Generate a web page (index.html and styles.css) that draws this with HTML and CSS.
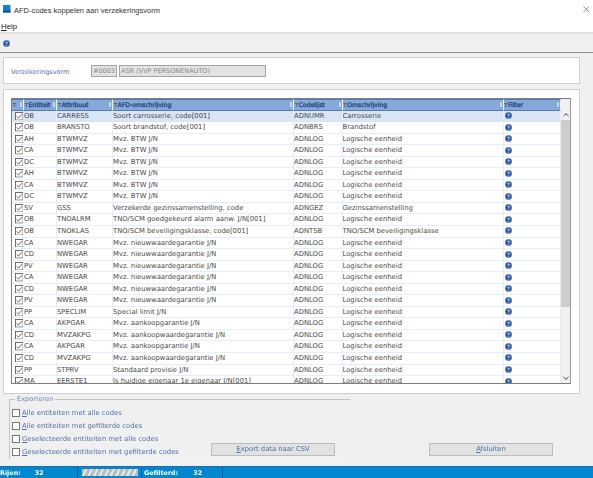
FILE: index.html
```html
<!DOCTYPE html>
<html lang="nl">
<head>
<meta charset="utf-8">
<title>AFD-codes koppelen aan verzekeringsvorm</title>
<link rel="stylesheet" href="styles.css">
</head>
<body>
<svg class="defs" width="0" height="0">
<symbol id="info" viewBox="0 0 8 8"><circle cx="4" cy="4" r="3.8" fill="#2c56a8" stroke="#8d9ab5" stroke-width=".5"/><path d="M2.9 3.1C3 2.2 5.1 2.1 5.1 3.2 5.1 4 4.1 4 4.1 4.9" fill="none" stroke="#fff" stroke-width=".9"/><circle cx="4.1" cy="6" r=".5" fill="#fff"/></symbol>
<symbol id="chk" viewBox="0 0 10 10"><rect x=".5" y=".5" width="9" height="9" fill="#fff" stroke="#555"/><path d="M2.2 5.2 4.1 7.2 7.9 2.7" fill="none" stroke="#333" stroke-width=".9"/></symbol>
</svg>
<div class="window">
<header class="titlebar">
<svg class="appicon" viewBox="0 0 8 8"><rect width="8" height="8" fill="#1a7fc4"/><rect y="6" width="8" height="2" fill="#0f4f86"/></svg>
<span class="title">AFD-codes koppelen aan verzekeringsvorm</span>
<svg class="close" viewBox="0 0 7 7"><path d="M.5.5 6.5 6.5M6.5.5.5 6.5" stroke="#555" stroke-width=".7"/></svg>
</header>
<nav class="menubar"><span><u>H</u>elp</span></nav>
<div class="toolbar"><svg class="tool-info"><use href="#info"/></svg></div>
<main class="content">
<section class="panel top-panel">
<label class="vv-label">Verzekeringsvorm</label>
<span class="field code">#0003</span>
<span class="field name">ASR (VVP PERSONENAUTO)</span>
</section>
<section class="panel grid-panel">
<div class="table-wrap">
<div class="table">
<div class="row head">
<div class="hc"><b><i>T</i></b><em></em></div>
<div class="hc"><b><i>T</i>Entiteit</b><em></em></div>
<div class="hc"><b><i>T</i>Attribuut</b><em></em></div>
<div class="hc"><b><i>T</i>AFD-omschrijving</b><em></em></div>
<div class="hc"><b><i>T</i>Codelijst</b><em></em></div>
<div class="hc"><b><i>T</i>Omschrijving</b><em></em></div>
<div class="hc"><b><i>T</i>Filter</b><em></em></div>
</div>
<div class="row sel"><div class="c ck"><svg><use href="#chk"/></svg></div><div class="c">OB</div><div class="c">CARRESS</div><div class="c">Soort carrosserie, code[001]</div><div class="c">ADNUMR</div><div class="c">Carrosserie</div><div class="c"><svg class="fi"><use href="#info"/></svg></div></div>
<div class="row"><div class="c ck"><svg><use href="#chk"/></svg></div><div class="c">OB</div><div class="c">BRANSTO</div><div class="c">Soort brandstof, code[001]</div><div class="c">ADNBRS</div><div class="c">Brandstof</div><div class="c"><svg class="fi"><use href="#info"/></svg></div></div>
<div class="row"><div class="c ck"><svg><use href="#chk"/></svg></div><div class="c">AH</div><div class="c">BTWMVZ</div><div class="c">Mvz. BTW J/N</div><div class="c">ADNLOG</div><div class="c">Logische eenheid</div><div class="c"><svg class="fi"><use href="#info"/></svg></div></div>
<div class="row"><div class="c ck"><svg><use href="#chk"/></svg></div><div class="c">CA</div><div class="c">BTWMVZ</div><div class="c">Mvz. BTW J/N</div><div class="c">ADNLOG</div><div class="c">Logische eenheid</div><div class="c"><svg class="fi"><use href="#info"/></svg></div></div>
<div class="row"><div class="c ck"><svg><use href="#chk"/></svg></div><div class="c">DC</div><div class="c">BTWMVZ</div><div class="c">Mvz. BTW J/N</div><div class="c">ADNLOG</div><div class="c">Logische eenheid</div><div class="c"><svg class="fi"><use href="#info"/></svg></div></div>
<div class="row"><div class="c ck"><svg><use href="#chk"/></svg></div><div class="c">AH</div><div class="c">BTWMVZ</div><div class="c">Mvz. BTW J/N</div><div class="c">ADNLOG</div><div class="c">Logische eenheid</div><div class="c"><svg class="fi"><use href="#info"/></svg></div></div>
<div class="row"><div class="c ck"><svg><use href="#chk"/></svg></div><div class="c">CA</div><div class="c">BTWMVZ</div><div class="c">Mvz. BTW J/N</div><div class="c">ADNLOG</div><div class="c">Logische eenheid</div><div class="c"><svg class="fi"><use href="#info"/></svg></div></div>
<div class="row"><div class="c ck"><svg><use href="#chk"/></svg></div><div class="c">DC</div><div class="c">BTWMVZ</div><div class="c">Mvz. BTW J/N</div><div class="c">ADNLOG</div><div class="c">Logische eenheid</div><div class="c"><svg class="fi"><use href="#info"/></svg></div></div>
<div class="row"><div class="c ck"><svg><use href="#chk"/></svg></div><div class="c">SV</div><div class="c">GSS</div><div class="c">Verzekerde gezinssamenstelling, code</div><div class="c">ADNGEZ</div><div class="c">Gezinssamenstelling</div><div class="c"><svg class="fi"><use href="#info"/></svg></div></div>
<div class="row"><div class="c ck"><svg><use href="#chk"/></svg></div><div class="c">OB</div><div class="c">TNOALRM</div><div class="c">TNO/SCM goedgekeurd alarm aanw. J/N[001]</div><div class="c">ADNLOG</div><div class="c">Logische eenheid</div><div class="c"><svg class="fi"><use href="#info"/></svg></div></div>
<div class="row"><div class="c ck"><svg><use href="#chk"/></svg></div><div class="c">OB</div><div class="c">TNOKLAS</div><div class="c">TNO/SCM beveiligingsklasse, code[001]</div><div class="c">ADNTSB</div><div class="c">TNO/SCM beveiligingsklasse</div><div class="c"><svg class="fi"><use href="#info"/></svg></div></div>
<div class="row"><div class="c ck"><svg><use href="#chk"/></svg></div><div class="c">CA</div><div class="c">NWEGAR</div><div class="c">Mvz. nieuwwaardegarantie J/N</div><div class="c">ADNLOG</div><div class="c">Logische eenheid</div><div class="c"><svg class="fi"><use href="#info"/></svg></div></div>
<div class="row"><div class="c ck"><svg><use href="#chk"/></svg></div><div class="c">CD</div><div class="c">NWEGAR</div><div class="c">Mvz. nieuwwaardegarantie J/N</div><div class="c">ADNLOG</div><div class="c">Logische eenheid</div><div class="c"><svg class="fi"><use href="#info"/></svg></div></div>
<div class="row"><div class="c ck"><svg><use href="#chk"/></svg></div><div class="c">PV</div><div class="c">NWEGAR</div><div class="c">Mvz. nieuwwaardegarantie J/N</div><div class="c">ADNLOG</div><div class="c">Logische eenheid</div><div class="c"><svg class="fi"><use href="#info"/></svg></div></div>
<div class="row"><div class="c ck"><svg><use href="#chk"/></svg></div><div class="c">CA</div><div class="c">NWEGAR</div><div class="c">Mvz. nieuwwaardegarantie J/N</div><div class="c">ADNLOG</div><div class="c">Logische eenheid</div><div class="c"><svg class="fi"><use href="#info"/></svg></div></div>
<div class="row"><div class="c ck"><svg><use href="#chk"/></svg></div><div class="c">CD</div><div class="c">NWEGAR</div><div class="c">Mvz. nieuwwaardegarantie J/N</div><div class="c">ADNLOG</div><div class="c">Logische eenheid</div><div class="c"><svg class="fi"><use href="#info"/></svg></div></div>
<div class="row"><div class="c ck"><svg><use href="#chk"/></svg></div><div class="c">PV</div><div class="c">NWEGAR</div><div class="c">Mvz. nieuwwaardegarantie J/N</div><div class="c">ADNLOG</div><div class="c">Logische eenheid</div><div class="c"><svg class="fi"><use href="#info"/></svg></div></div>
<div class="row"><div class="c ck"><svg><use href="#chk"/></svg></div><div class="c">PP</div><div class="c">SPECLIM</div><div class="c">Special limit J/N</div><div class="c">ADNLOG</div><div class="c">Logische eenheid</div><div class="c"><svg class="fi"><use href="#info"/></svg></div></div>
<div class="row"><div class="c ck"><svg><use href="#chk"/></svg></div><div class="c">CA</div><div class="c">AKPGAR</div><div class="c">Mvz. aankoopgarantie J/N</div><div class="c">ADNLOG</div><div class="c">Logische eenheid</div><div class="c"><svg class="fi"><use href="#info"/></svg></div></div>
<div class="row"><div class="c ck"><svg><use href="#chk"/></svg></div><div class="c">CD</div><div class="c">MVZAKPG</div><div class="c">Mvz. aankoopwaardegarantie J/N</div><div class="c">ADNLOG</div><div class="c">Logische eenheid</div><div class="c"><svg class="fi"><use href="#info"/></svg></div></div>
<div class="row"><div class="c ck"><svg><use href="#chk"/></svg></div><div class="c">CA</div><div class="c">AKPGAR</div><div class="c">Mvz. aankoopgarantie J/N</div><div class="c">ADNLOG</div><div class="c">Logische eenheid</div><div class="c"><svg class="fi"><use href="#info"/></svg></div></div>
<div class="row"><div class="c ck"><svg><use href="#chk"/></svg></div><div class="c">CD</div><div class="c">MVZAKPG</div><div class="c">Mvz. aankoopwaardegarantie J/N</div><div class="c">ADNLOG</div><div class="c">Logische eenheid</div><div class="c"><svg class="fi"><use href="#info"/></svg></div></div>
<div class="row"><div class="c ck"><svg><use href="#chk"/></svg></div><div class="c">PP</div><div class="c">STPRV</div><div class="c">Standaard provisie J/N</div><div class="c">ADNLOG</div><div class="c">Logische eenheid</div><div class="c"><svg class="fi"><use href="#info"/></svg></div></div>
<div class="row"><div class="c ck"><svg><use href="#chk"/></svg></div><div class="c">MA</div><div class="c">EERSTE1</div><div class="c">Is huidige eigenaar 1e eigenaar J/N[001]</div><div class="c">ADNLOG</div><div class="c">Logische eenheid</div><div class="c"><svg class="fi"><use href="#info"/></svg></div></div>
</div>
<div class="scrollbar">
<svg class="arrow" viewBox="0 0 10 10"><path d="M2.5 6 5 3.6 7.5 6" fill="none" stroke="#444" stroke-width="1"/></svg>
<div class="thumb"></div>
<div class="track"></div>
<svg class="arrow" viewBox="0 0 10 10"><path d="M2.5 4 5 6.4 7.5 4" fill="none" stroke="#444" stroke-width="1"/></svg>
</div>
</div>
</section>
<section class="bottom">
<fieldset class="export">
<legend>Exporteren</legend>
<div class="export-body">
<div class="options">
<label class="opt"><span class="box"></span><span><u>A</u>lle entiteiten met alle codes</span></label>
<label class="opt"><span class="box"></span><span><u>A</u>lle entiteiten met gefilterde codes</span></label>
<label class="opt"><span class="box"></span><span><u>G</u>eselecteerde entiteiten met alle codes</span></label>
<label class="opt"><span class="box"></span><span><u>G</u>eselecteerde entiteiten met gefilterde codes</span></label>
</div>
<button class="btn export-btn"><u>E</u>xport data naar CSV</button>
</div>
</fieldset>
<button class="btn close-btn"><u>A</u>fsluiten</button>
</section>
</main>
<footer class="status">
<div class="st st1"><span>Rijen:</span><span class="num">32</span></div>
<div class="st st2"><div class="progress"></div></div>
<div class="st st3"><span>Gefilterd:</span><span class="num">32</span></div>
<div class="st st4"></div>
</footer>
</div>
</body>
</html>
```
FILE: styles.css
```css
* { box-sizing: border-box; }
html, body { margin: 0; padding: 0; height: 100%; overflow: hidden; }
body { font-family: "DejaVu Sans", sans-serif; font-size: 6.82px; color: #444; background: #f0f0f0; }
.defs { position: absolute; }
.window { width: 593px; height: 478px; display: flex; flex-direction: column; filter: blur(.25px); }

.titlebar { height: 20px; background: #fff; display: flex; align-items: center; padding: 0 4px 2px 3px; flex: none; }
.appicon { width: 7.5px; height: 7.5px; margin-right: 3.5px; }
.title { flex: 1; font-family: "Liberation Sans", sans-serif; font-size: 7.5px; color: #333; margin-top: 2px; }
.close { width: 6.5px; height: 6.5px; }

.menubar { height: 12px; background: #fff; font-family: "Liberation Sans", sans-serif; font-size: 7.8px; color: #222; padding: 2px 0 0 1px; flex: none; }
.toolbar { height: 21px; flex: none; background: #f0f0f0; border-top: 2px solid #e3e3e3; border-bottom: 1px solid #8f8f8f; display: flex; align-items: center; padding-left: 3px; }
.tool-info { width: 7px; height: 7px; }

.content { flex: 1; display: flex; flex-direction: column; padding: 4px 13px 0 3px; min-height: 0; }
.panel { background: #fff; border: 1px solid #cfcfcf; }
.top-panel { height: 27px; display: flex; align-items: center; padding: 1px 0 0 7px; flex: none; }
.vv-label { width: 80px; color: #4a6fb0; font-size: 6.5px; margin-top: 2px; }
.field { height: 12px; background: #e2e2e2; border: 1px solid #a4a4a4; color: #8a8a8a; line-height: 10px; padding-left: 1px; font-size: 6.5px; }
.code { width: 26px; margin-right: 2px; }
.name { width: 147px; }

.grid-panel { height: 305px; margin-top: 5px; padding: 8px 9px 0 7px; flex: none; }
.table-wrap { width: 560px; height: 286px; display: flex; border: 1px solid #7e7e7e; border-right-color: #9a9a9a; overflow: hidden; background: #fff; }
.table { width: 549px; flex: none; overflow: hidden; }
.row { display: grid; grid-template-columns: 12px 33px 56px 181px 48.5px 161px 57.5px; height: 11.55px; background: #fff; }
.row.sel { background: #d9e5f5; }
.row.sel .c { border-bottom-color: #d9e5f5; }
.c { border-right: 1px solid #e6eefb; border-bottom: 1px solid #e6eefb; line-height: 10.5px; white-space: nowrap; overflow: hidden; color: #4a4a4a; }
.ck { padding: 1px 0 0 2.5px; border-right: 0; }
.ck svg { display: block; width: 8.5px; height: 8.5px; }
.fi { display: block; width: 7px; height: 7px; margin: 1.5px 0 0 1px; }

.row.head { height: 11.5px; background: #f0f0f0; }
.hc { background: #86a9dc; border-top: 1px solid #5c7ca8; border-bottom: 1px solid #5c7ca8; border-right: 1px solid #f0f0f0; display: flex; justify-content: space-between; align-items: center; padding: 0 1px; overflow: hidden; }
.hc b { font-weight: 400; font-size: 6.3px; color: #1e4580; letter-spacing: -.1px; -webkit-text-stroke: .3px #1e4580; white-space: nowrap; }
.hc i { font-style: normal; font-size: 5px; color: #5e4a22; -webkit-text-stroke: .2px #5e4a22; margin-right: .5px; }
.hc em { width: 2px; height: 5px; background: #c9d8ef; flex: none; }

.scrollbar { width: 10px; flex: none; display: flex; flex-direction: column; background: #f0f0f0; }
.scrollbar .arrow { width: 10px; height: 10px; flex: none; }
.scrollbar .arrow:first-child { margin-top: 11px; }
.thumb { height: 187px; background: #cdcdcd; flex: none; }
.track { flex: 1; }

.bottom { display: flex; align-items: flex-end; height: 72px; flex: none; padding-left: 6px; }
.export { width: 342px; height: 65px; margin: 0 0 6px; padding: 0 0 3px 2px; border: 1px solid #f6f6f6; border-left-color: #c4c4c4; border-top-color: #c4c4c4; min-width: 0; }
.export legend { color: #6a86b8; font-size: 6.6px; padding: 0 2px; margin-left: 3px; line-height: 8px; }
.export-body { display: flex; align-items: flex-end; justify-content: space-between; height: 53px; }
.options { display: flex; flex-direction: column; gap: 4.5px; }
.opt { display: flex; align-items: center; height: 8.5px; color: #5070aa; font-size: 6.8px; gap: 2px; white-space: nowrap; }
.box { width: 8px; height: 8px; background: #fff; border: 1px solid #777; flex: none; }
.btn { height: 13.5px; background: #e2e2e2; border: 1px solid #bcbcbc; color: #5070aa; font: 6.8px "DejaVu Sans", sans-serif; padding: 0; }
.export-btn { width: 124px; margin-right: 15px; }
.close-btn { width: 124px; margin: 0 0 10px 78px; }

.status { height: 12px; flex: none; background: #0288d1; border-top: 1px solid #1b6fa6; display: flex; color: #fff; font-weight: 700; font-size: 6.4px; }
.st { height: 100%; display: flex; align-items: center; border-right: 1px solid #0a5f99; }
.st1 { width: 78px; }
.st1 .num { margin-left: 14px; }
.st2 { width: 64px; padding: 0 3px 0 4px; }
.st3 { width: 81px; padding-left: 2px; }
.st3 .num { margin-left: 15px; }
.st4 { flex: 1; border-right: 0; }
.progress { width: 100%; height: 7px; background: repeating-linear-gradient(115deg, #bdbdbd 0 3px, #e8e8e8 3px 5px); }
```
